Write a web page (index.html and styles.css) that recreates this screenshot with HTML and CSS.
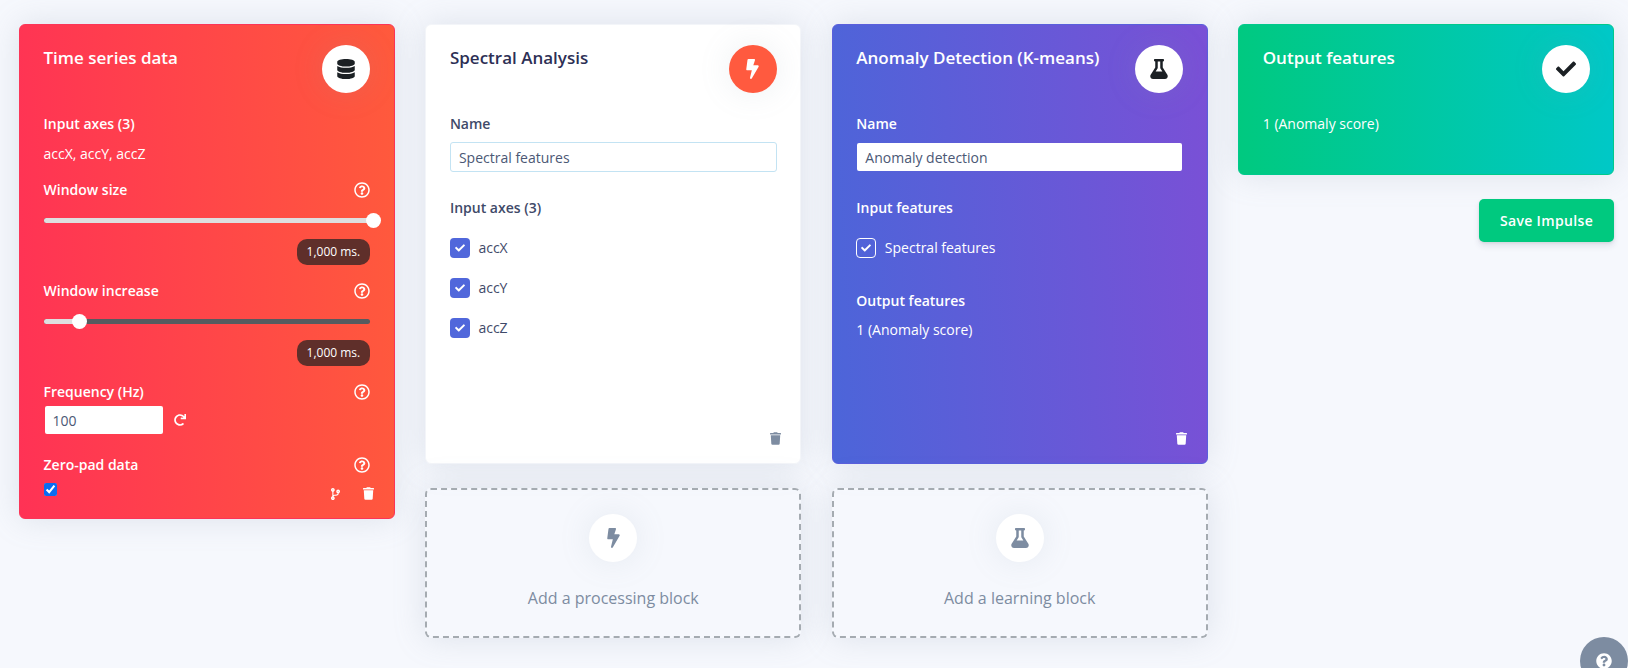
FILE: index.html
```html
<!DOCTYPE html>
<html lang="en">
<head>
    <meta charset="UTF-8">
    <meta name="viewport" content="width=device-width, initial-scale=1.0">
    <title>Create impulse</title>
    <link rel="stylesheet" href="styles.css">
</head>
<body>
    <svg class="icon-defs" aria-hidden="true">
        <symbol id="i-database" viewBox="0 0 448 512"><path d="M448 73.143v45.714C448 159.143 347.667 192 224 192S0 159.143 0 118.857V73.143C0 32.857 100.333 0 224 0s224 32.857 224 73.143zM448 176v102.857C448 319.143 347.667 352 224 352S0 319.143 0 278.857V176c48.125 33.143 136.208 48.572 224 48.572S399.874 209.143 448 176zm0 160v102.857C448 479.143 347.667 512 224 512S0 479.143 0 438.857V336c48.125 33.143 136.208 48.572 224 48.572S399.874 369.143 448 336z"/></symbol>
        <symbol id="i-bolt" viewBox="0 0 320 512"><path d="M296 160H180.6l42.6-129.8C227.2 15 215.7 0 200 0H56C44 0 33.8 8.9 32.2 20.8l-32 240C-1.7 275.2 9.5 288 24 288h118.7L96.6 482.5c-3.6 15.2 8 29.5 23.3 29.5 8.4 0 16.4-4.4 20.8-12l176-304c9.3-15.9-2.2-36-20.7-36z"/></symbol>
        <symbol id="i-flask" viewBox="0 0 448 512"><path d="M437.2 403.5L320 215V64h8c13.3 0 24-10.7 24-24V24c0-13.3-10.7-24-24-24H120c-13.3 0-24 10.7-24 24v16c0 13.3 10.7 24 24 24h8v151L10.8 403.5C-18.5 450.6 15.3 512 70.9 512h306.2c55.7 0 89.4-61.5 60.1-108.5zM137.9 320l48.2-77.6c3.7-5.2 5.8-11.6 5.8-18.4V64h64v160c0 6.9 2.2 13.2 5.8 18.4l48.2 77.6h-172z"/></symbol>
        <symbol id="i-check" viewBox="0 0 512 512"><path d="M173.898 439.404l-166.4-166.4c-9.997-9.997-9.997-26.206 0-36.204l36.203-36.204c9.997-9.998 26.207-9.998 36.204 0L192 312.69 432.095 72.596c9.997-9.997 26.207-9.997 36.204 0l36.203 36.204c9.997 9.997 9.997 26.206 0 36.204l-294.4 294.401c-9.998 9.997-26.207 9.997-36.204-.001z"/></symbol>
        <symbol id="i-trash" viewBox="0 0 448 512"><path d="M432 32H312l-9.4-18.7A24 24 0 0 0 281.1 0H166.8a23.72 23.72 0 0 0-21.4 13.3L136 32H16A16 16 0 0 0 0 48v32a16 16 0 0 0 16 16h416a16 16 0 0 0 16-16V48a16 16 0 0 0-16-16zM53.2 467a48 48 0 0 0 47.9 45h245.8a48 48 0 0 0 47.9-45L416 128H32z"/></symbol>
        <symbol id="i-branch" viewBox="0 0 384 512"><path d="M384 144c0-44.2-35.8-80-80-80s-80 35.8-80 80c0 36.4 24.3 67.1 57.5 76.8-.6 16.1-4.2 28.5-11 36.9-15.4 19.2-49.3 22.4-85.2 25.7-28.2 2.6-57.4 5.4-81.3 16.9v-144c32.5-10.2 56-40.5 56-76.3 0-44.2-35.8-80-80-80S0 35.8 0 80c0 35.8 23.5 66.1 56 76.3v199.3C23.5 365.9 0 396.2 0 432c0 44.2 35.8 80 80 80s80-35.8 80-80c0-34-21.2-63.1-51.2-74.6 3.1-5.2 7.8-9.8 14.9-13.4 16.2-8.2 40.4-10.4 66.1-12.8 42.2-3.9 90-8.4 118.2-43.4 14-17.4 21.1-39.8 21.6-67.9 31.6-10.8 54.4-40.7 54.4-75.9zM80 64c8.8 0 16 7.2 16 16s-7.2 16-16 16-16-7.2-16-16 7.2-16 16-16zm0 384c-8.8 0-16-7.2-16-16s7.2-16 16-16 16 7.2 16 16-7.2 16-16 16zm224-320c8.8 0 16 7.2 16 16s-7.2 16-16 16-16-7.2-16-16 7.2-16 16-16z"/></symbol>
        <symbol id="i-redo" viewBox="0 0 512 512"><path d="M500.33 0h-47.41a12 12 0 0 0-12 12.57l4 82.76A247.42 247.42 0 0 0 256 8C119.34 8 7.9 119.53 8 256.19 8.1 393.07 119.1 504 256 504a247.1 247.1 0 0 0 166.18-63.91 12 12 0 0 0 .48-17.43l-34-34a12 12 0 0 0-16.38-.55A176 176 0 1 1 402.1 157.8l-101.53-4.87a12 12 0 0 0-12.57 12v47.41a12 12 0 0 0 12 12h200.33a12 12 0 0 0 12-12V12a12 12 0 0 0-12-12z"/></symbol>
        <symbol id="i-help" viewBox="0 0 512 512"><path d="M256 8C119.043 8 8 119.083 8 256c0 136.997 111.043 248 248 248s248-111.003 248-248C504 119.083 392.957 8 256 8zm0 448c-110.532 0-200-89.431-200-200 0-110.495 89.472-200 200-200 110.491 0 200 89.471 200 200 0 110.569-89.431 200-200 200zm107.244-255.2c0 67.052-72.421 68.084-72.421 92.863V300c0 6.627-5.373 12-12 12h-45.647c-6.627 0-12-5.373-12-12v-8.659c0-35.745 27.1-50.034 47.579-61.516 17.561-9.845 28.324-16.541 28.324-29.579 0-17.246-21.999-28.693-39.784-28.693-23.189 0-33.894 10.977-48.942 29.969-4.057 5.12-11.46 6.071-16.666 2.124l-27.824-21.098c-5.107-3.872-6.251-11.066-2.644-16.363C184.846 131.491 214.94 112 261.794 112c49.071 0 101.45 38.304 101.45 88.8zM298 368c0 23.159-18.841 42-42 42s-42-18.841-42-42 18.841-42 42-42 42 18.841 42 42z"/></symbol>
        <symbol id="i-help-solid" viewBox="0 0 512 512"><path d="M504 256c0 136.997-111.043 248-248 248S8 392.997 8 256C8 119.083 119.043 8 256 8s248 111.083 248 248zM262.655 90c-54.497 0-89.255 22.957-116.549 63.758-3.536 5.286-2.353 12.415 2.715 16.258l34.699 26.31c5.205 3.947 12.621 3.008 16.665-2.122 17.864-22.658 30.113-35.797 57.303-35.797 20.429 0 45.698 13.148 45.698 32.958 0 14.976-12.363 22.667-32.534 33.976C247.128 238.528 216 254.941 216 296v4c0 6.627 5.373 12 12 12h56c6.627 0 12-5.373 12-12v-1.333c0-28.462 83.186-29.647 83.186-106.667 0-58.002-60.165-102-116.531-102zM256 338c-25.365 0-46 20.635-46 46 0 25.364 20.635 46 46 46s46-20.636 46-46c0-25.365-20.635-46-46-46z"/></symbol>
    </svg>

    <main class="impulse">
        <!-- Input block -->
        <section class="card card-danger">
            <div class="card-head">
                <h3 class="card-title">Time series data</h3>
                <span class="round-icon"><svg class="icon-db"><use href="#i-database"/></svg></span>
            </div>
            <div class="label first">Input axes (3)</div>
            <div class="text axes-text">accX, accY, accZ</div>

            <div class="label-row">
                <span class="label">Window size</span>
                <svg class="icon-help"><use href="#i-help"/></svg>
            </div>
            <div class="slider"><div class="slider-fill" style="width: 101%"><span class="slider-thumb"></span></div></div>
            <div class="pill-row"><span class="pill">1,000 ms.</span></div>

            <div class="label-row">
                <span class="label">Window increase</span>
                <svg class="icon-help"><use href="#i-help"/></svg>
            </div>
            <div class="slider"><div class="slider-fill" style="width: 11%"><span class="slider-thumb"></span></div></div>
            <div class="pill-row"><span class="pill">1,000 ms.</span></div>

            <div class="label-row">
                <span class="label">Frequency (Hz)</span>
                <svg class="icon-help"><use href="#i-help"/></svg>
            </div>
            <div class="freq-row">
                <input class="input input-freq" type="text" value="100">
                <svg class="icon-redo"><use href="#i-redo"/></svg>
            </div>

            <div class="label-row zero-pad">
                <span class="label">Zero-pad data</span>
                <svg class="icon-help"><use href="#i-help"/></svg>
            </div>
            <div class="zero-row">
                <input class="native-check" type="checkbox" checked>
                <div class="card-actions">
                    <svg class="icon-branch"><use href="#i-branch"/></svg>
                    <svg class="icon-trash"><use href="#i-trash"/></svg>
                </div>
            </div>
        </section>

        <!-- Processing column -->
        <div class="column">
            <section class="card card-white card-tall">
                <div class="card-head">
                    <h3 class="card-title">Spectral Analysis</h3>
                    <span class="round-icon round-orange"><svg class="icon-bolt"><use href="#i-bolt"/></svg></span>
                </div>
                <div class="label first">Name</div>
                <input class="input input-name input-outlined" type="text" value="Spectral features">
                <div class="label section-label">Input axes (3)</div>
                <div class="checks">
                    <div class="check-row"><span class="check check-blue"><svg><use href="#i-check"/></svg></span><span class="check-text">accX</span></div>
                    <div class="check-row"><span class="check check-blue"><svg><use href="#i-check"/></svg></span><span class="check-text">accY</span></div>
                    <div class="check-row"><span class="check check-blue"><svg><use href="#i-check"/></svg></span><span class="check-text">accZ</span></div>
                </div>
                <div class="card-foot"><svg class="icon-trash"><use href="#i-trash"/></svg></div>
            </section>
            <div class="add-block">
                <span class="round-icon add-icon"><svg class="icon-bolt"><use href="#i-bolt"/></svg></span>
                <span class="add-text">Add a processing block</span>
            </div>
        </div>

        <!-- Learning column -->
        <div class="column">
            <section class="card card-primary card-tall">
                <div class="card-head">
                    <h3 class="card-title">Anomaly Detection (K-means)</h3>
                    <span class="round-icon"><svg class="icon-flask"><use href="#i-flask"/></svg></span>
                </div>
                <div class="label first">Name</div>
                <input class="input input-name" type="text" value="Anomaly detection">
                <div class="label section-label">Input features</div>
                <div class="checks">
                    <div class="check-row"><span class="check check-outline"><svg><use href="#i-check"/></svg></span><span class="check-text">Spectral features</span></div>
                </div>
                <div class="label output-label">Output features</div>
                <div class="text output-text">1 (Anomaly score)</div>
                <div class="card-foot"><svg class="icon-trash"><use href="#i-trash"/></svg></div>
            </section>
            <div class="add-block">
                <span class="round-icon add-icon"><svg class="icon-flask"><use href="#i-flask"/></svg></span>
                <span class="add-text">Add a learning block</span>
            </div>
        </div>

        <!-- Output column -->
        <div class="column column-end">
            <section class="card card-success card-output">
                <div class="card-head">
                    <h3 class="card-title">Output features</h3>
                    <span class="round-icon"><svg class="icon-check"><use href="#i-check"/></svg></span>
                </div>
                <div class="text first">1 (Anomaly score)</div>
            </section>
            <button class="btn-save" type="button">Save Impulse</button>
        </div>
    </main>

    <button class="help-fab" type="button" aria-label="Help"><svg><use href="#i-help-solid"/></svg></button>
</body>
</html>
```

FILE: styles.css
```css
/* Base styles */
html, body {
    height: 100%;
    overflow: hidden;
}

body {
    margin: 0;
    background: #f6f8fd;
    color: #3f4a69;
    font-family: "Open Sans", sans-serif;
    font-size: 14px;
    line-height: 21px;
}

svg {
    display: block;
    fill: currentColor;
}

.icon-defs {
    display: none;
}

/* Page grid */
.impulse {
    display: grid;
    grid-template-columns: repeat(4, 1fr);
    gap: 30.66px;
    align-items: start;
    padding: 24px 14px 0 19px;
}

.column {
    display: flex;
    flex-direction: column;
    gap: 24px;
}

.column-end {
    align-items: flex-end;
}

/* Cards */
.card {
    display: flex;
    flex-direction: column;
    box-sizing: border-box;
    padding: 20px 23.5px 18px;
    border: 1px solid transparent;
    border-radius: 6px;
    box-shadow: 0 0 32px 0 rgba(136, 152, 170, 0.22);
}

.card-tall {
    height: 440px;
    width: 100%;
}

.card-output {
    width: 100%;
    padding-bottom: 40px;
}

.card-danger {
    border-color: #fb3558;
    background: linear-gradient(87deg, #ff3255, #ff5a3c);
    color: #fff;
}

.card-white {
    border-color: #f3f5f9;
    background: #fff;
}

.card-primary {
    border-color: #5a5fdc;
    background: linear-gradient(87deg, #4c65d9, #7a50d6);
    color: #fff;
}

.card-success {
    border-color: #00c98c;
    background: linear-gradient(87deg, #00c97f, #00c8c8);
    color: #fff;
}

.card-head {
    display: flex;
    justify-content: space-between;
    align-items: flex-start;
    height: 48px;
}

.card-title {
    margin: 0;
    padding-top: 2px;
    font-size: 17px;
    line-height: 21px;
    font-weight: 600;
}

.card-white .card-title {
    color: #2d2f55;
}

.round-icon {
    display: flex;
    align-items: center;
    justify-content: center;
    flex: none;
    width: 48px;
    height: 48px;
    border-radius: 50%;
    background: #fff;
    color: #1b2024;
    box-shadow: 0 0 32px 0 rgba(136, 152, 170, 0.15);
}

.round-orange {
    background: #ff5a3f;
    color: #fff;
}

.icon-db {
    width: 18px;
    height: 20px;
}

.icon-bolt {
    width: 13px;
    height: 20px;
}

.icon-flask {
    width: 18px;
    height: 20px;
}

.icon-check {
    width: 20px;
    height: 20px;
}

/* Text rows */
.label {
    font-weight: 600;
}

.first {
    margin-top: 20px;
}

.axes-text {
    margin-top: 9px;
}

.output-text {
    margin-top: 8px;
}

.label-row {
    display: flex;
    justify-content: space-between;
    align-items: center;
    margin-top: 15px;
}

.zero-pad {
    margin-top: 19px;
}

.icon-help {
    width: 16px;
    height: 16px;
}

/* Sliders */
.slider {
    height: 5px;
    margin: 18px 0 4px;
    border-radius: 3px;
    background: #565b5f;
}

.slider-fill {
    position: relative;
    height: 100%;
    border-radius: 3px;
    background: #dedfdf;
}

.slider-thumb {
    position: absolute;
    top: -5px;
    right: -7.5px;
    width: 15px;
    height: 15px;
    border-radius: 50%;
    background: #fff;
}

.pill-row {
    display: flex;
    justify-content: flex-end;
    margin-top: 12px;
}

.pill {
    padding: 0 10px;
    border-radius: 10px;
    background: #5f2f2a;
    font-size: 12px;
    line-height: 26px;
}

/* Inputs */
.input {
    display: block;
    box-sizing: border-box;
    height: 30px;
    padding: 0 8px;
    border: 1px solid transparent;
    border-radius: 3px;
    background: #fff;
    background-clip: padding-box;
    color: #4b5875;
    font-family: inherit;
    font-size: 14px;
    outline: none;
}

.input-name {
    width: 100%;
    margin-top: 8px;
}

.input-outlined {
    border-color: #c3e3f3;
}

.input-freq {
    width: 120px;
}

.freq-row {
    display: flex;
    align-items: center;
    gap: 10px;
    margin-top: 3px;
}

.icon-redo {
    width: 12px;
    height: 12px;
}

.zero-row {
    display: flex;
    justify-content: space-between;
    height: 17px;
    margin-top: 8px;
}

.native-check {
    width: 13px;
    height: 13px;
    margin: 0;
    accent-color: #0a6cf0;
}

.card-actions {
    display: flex;
    align-items: flex-end;
    gap: 23px;
    margin-right: -4px;
}

.icon-branch {
    width: 9px;
    height: 12px;
}

.icon-trash {
    width: 11px;
    height: 13px;
}

/* Checkbox rows */
.section-label {
    margin-top: 25px;
}

.checks {
    display: flex;
    flex-direction: column;
    gap: 20px;
    margin-top: 20px;
}

.check-row {
    display: flex;
    align-items: center;
    gap: 8.5px;
    height: 20px;
}

.check-text {
    margin-bottom: 2px;
}

.check {
    display: flex;
    align-items: center;
    justify-content: center;
    box-sizing: border-box;
    width: 20px;
    height: 20px;
    border-radius: 4px;
}

.check svg {
    width: 10px;
    height: 10px;
}

.check-blue {
    background: #5067db;
    color: #fff;
}

.check-outline {
    border: 1px solid #fff;
}

.output-label {
    margin-top: 32px;
}

.card-foot {
    display: flex;
    justify-content: flex-end;
    margin-top: auto;
    margin-right: -4px;
}

.card-white .card-foot {
    color: #7d8ca1;
}

/* Add block */
.add-block {
    display: flex;
    flex-direction: column;
    align-items: center;
    box-sizing: border-box;
    width: 100%;
    height: 150px;
    padding-top: 24px;
    border: 2px dashed #a5abb1;
    border-radius: 6px;
    box-shadow: 0 0 32px 0 rgba(136, 152, 170, 0.22);
}

.add-icon {
    color: #7d8ca1;
}

.add-text {
    margin-top: 24px;
    color: #7d8ca1;
    font-size: 16px;
    line-height: 24px;
}

/* Buttons */
.btn-save {
    width: 135px;
    height: 43px;
    border: 0;
    border-radius: 5px;
    background: #00c97f;
    color: #fff;
    font-family: inherit;
    font-size: 14px;
    font-weight: 600;
    letter-spacing: 0.35px;
    box-shadow: 0 4px 6px rgba(50, 50, 93, 0.11), 0 1px 3px rgba(0, 0, 0, 0.08);
}

.help-fab {
    position: fixed;
    right: 0;
    bottom: -17px;
    display: flex;
    align-items: center;
    justify-content: center;
    width: 48px;
    height: 48px;
    padding: 0;
    border: 0;
    border-radius: 50%;
    background: #7d8ca1;
    color: #fff;
}

.help-fab svg {
    width: 16px;
    height: 16px;
}
```
